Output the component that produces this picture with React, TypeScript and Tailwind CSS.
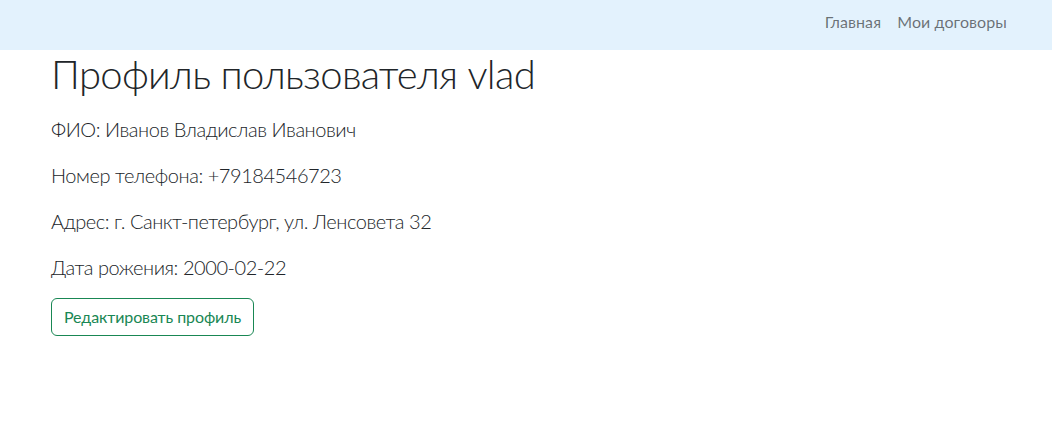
const links = ["Главная", "Мои договоры"];

const rows = [
  "ФИО: Иванов Владислав Иванович",
  "Номер телефона: +79184546723",
  "Адрес: г. Санкт-петербург, ул. Ленсовета 32",
  "Дата рожения: 2000-02-22",
];

export default function App() {
  return (
    <div className="min-h-screen bg-white text-[#212529]" style={{ fontFamily: "Lato, 'Open Sans', sans-serif" }}>
      <nav className="flex h-[50px] items-start justify-end bg-[#e3f2fd] pt-[10px] pr-[37px]">
        <ul className="flex">
          {links.map((l) => (
            <li key={l}>
              <a href="#" className="block px-2 text-[16px] leading-6 tracking-[0.1px] text-black/55">
                {l}
              </a>
            </li>
          ))}
        </ul>
      </nav>

      <main className="pl-[51px]">
        <h1 className="mb-4 text-[40px] leading-[48px] font-light tracking-[-0.7px]">Профиль пользователя vlad</h1>
        {rows.map((r) => (
          <p key={r} className="mb-4 text-[20px] leading-[30px] font-light tracking-[-0.45px]">
            {r}
          </p>
        ))}
        <button className="h-[38px] rounded-md border border-[#198754] px-3 text-[16px] tracking-[-0.1px] text-[#198754]">
          Редактировать профиль
        </button>
      </main>
    </div>
  );
}
